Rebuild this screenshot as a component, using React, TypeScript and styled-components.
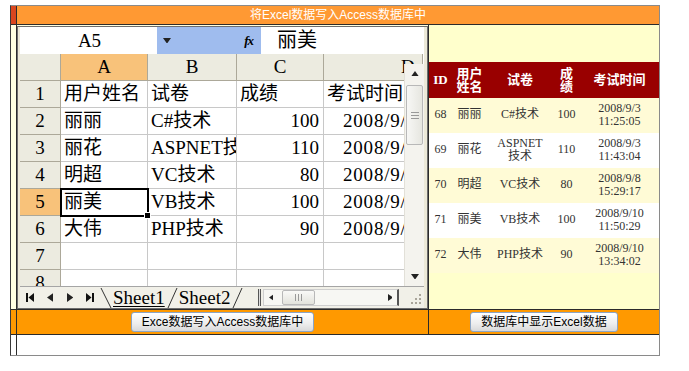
import React from "react";
import styled, { createGlobalStyle, css } from "styled-components";

const DARK = "#2b2b2b";
const SERIF = `"Liberation Serif", "Noto Sans CJK SC", serif`;
const SANS = `"Liberation Sans", "Noto Sans CJK SC", sans-serif`;

const GlobalStyle = createGlobalStyle`
  html, body { margin: 0; padding: 0; background: #ffffff; }
  body { font-family: ${SANS}; }
  * { box-sizing: border-box; }
`;

const Page = styled.div`
  padding: 5px 0 0 10px;
`;

const Frame = styled.div`
  width: 650px;
  display: grid;
  grid-template-columns: 6px 412px 230px;
  grid-template-rows: 19px 285px 25px 20px;
  border: 1px solid #8a8a8a;
  border-left-color: #3a3a3a;
`;

type Tone = "red" | "yellow" | "orange" | "white";
const stubBg: Record<Tone, string> = {
  red: "#d9461f",
  yellow: "#ffffe0",
  orange: "#ff9900",
  white: "#ffffff",
};

const Stub = styled.div<{ $tone: Tone; $last?: boolean }>`
  background: ${(p) => stubBg[p.$tone]};
  border-right: 1px solid ${DARK};
  border-bottom: ${(p) => (p.$last ? "none" : `1px solid ${DARK}`)};
`;

const TitleBar = styled.div`
  grid-column: 2 / 4;
  background: #ff9933;
  border-bottom: 1px solid ${DARK};
  color: #ffffff;
  font-family: ${SANS};
  font-size: 12px;
  line-height: 18px;
  text-align: center;
`;

const ExcelCell = styled.div`
  border-right: 1px solid ${DARK};
  border-bottom: 1px solid ${DARK};
  padding-top: 1px;
  background: #ffffe0;
`;

const DataCell = styled.div`
  background: #ffffcc;
  border-bottom: 1px solid ${DARK};
  display: flex;
  flex-direction: column;
  justify-content: center;
`;

const ButtonCell = styled.div<{ $divider?: boolean }>`
  background: #ff9900;
  border-bottom: 1px solid ${DARK};
  border-right: ${(p) => (p.$divider ? `1px solid ${DARK}` : "none")};
  display: flex;
  align-items: center;
  justify-content: center;
`;

const BottomFill = styled.div`
  grid-column: 2 / 4;
  background: #ffffff;
`;

const XpButton = styled.button`
  height: 20px;
  padding: 0 10px;
  font-family: ${SANS};
  font-size: 12px;
  line-height: 18px;
  color: #000000;
  border: 1px solid #8aa4c6;
  border-radius: 3px;
  background: linear-gradient(#ffffff, #ededed 60%, #d9d9d9);
  cursor: pointer;
`;

/* ---------- Excel control ---------- */

const Excel = styled.div`
  height: 100%;
  border: 1px solid #6d6d6d;
  background: #ece9d8;
  padding: 0 3px 0 2px;
  display: flex;
  flex-direction: column;
`;

const FormulaBar = styled.div`
  height: 27px;
  display: flex;
  flex-shrink: 0;
`;

const NameBox = styled.div`
  width: 137px;
  background: #ffffff;
  font-family: ${SERIF};
  font-size: 19px;
  line-height: 28px;
  text-align: center;
  padding-left: 2px;
`;

const FxArea = styled.div`
  width: 104px;
  background: #9fbcee;
  display: flex;
  align-items: center;
  justify-content: space-between;
  padding: 0 8px 0 6px;
`;

const FxLabel = styled.span`
  font-family: ${SERIF};
  font-style: italic;
  font-weight: bold;
  font-size: 13px;
  letter-spacing: -1px;
`;

const FormulaInput = styled.div`
  flex: 1;
  background: #ffffff;
  padding-left: 16px;
  font-family: ${SERIF};
  font-size: 20px;
  line-height: 26px;
`;

const SheetArea = styled.div`
  position: relative;
  height: 232px;
  flex-shrink: 0;
  overflow: hidden;
  background: #ffffff;
`;

const SheetGrid = styled.div`
  display: grid;
  grid-template-columns: 41px 87px 89px 87px 99px;
  grid-auto-rows: 27px;
  font-family: ${SERIF};
  font-size: 19px;
`;

const HeadCell = styled.div<{ $active?: boolean; $indent?: number }>`
  background: ${(p) => (p.$active ? "#f8c27a" : "#ecebe0")};
  border-right: 1px solid #aca899;
  border-bottom: 1px solid #aca899;
  line-height: 26px;
  text-align: ${(p) => (p.$indent ? "left" : "center")};
  padding-left: ${(p) => p.$indent ?? 0}px;
  color: #000;
  overflow: hidden;
`;

const Cell = styled.div<{ $align?: "left" | "right"; $sel?: boolean; $date?: boolean }>`
  position: relative;
  background: #ffffff;
  border-right: 1px solid #c8c8c8;
  border-bottom: 1px solid #c8c8c8;
  line-height: 26px;
  white-space: nowrap;
  overflow: hidden;
  text-align: ${(p) => p.$align ?? "left"};
  padding: 0 4px 0 3px;
  ${(p) =>
    p.$date &&
    css`
      padding-left: 19px;
      letter-spacing: 0.8px;
    `}
  ${(p) =>
    p.$sel &&
    css`
      overflow: visible;
      z-index: 2;
      &::after {
        content: "";
        position: absolute;
        left: -1px;
        top: -1px;
        right: -2px;
        bottom: -2px;
        border: 2px solid #000;
      }
      &::before {
        content: "";
        position: absolute;
        right: -4px;
        bottom: -4px;
        width: 5px;
        height: 5px;
        background: #000;
        border: 1px solid #fff;
        z-index: 3;
      }
    `}
`;

const VScroll = styled.div`
  position: absolute;
  top: 10px;
  right: 0;
  bottom: 0;
  width: 20px;
  background: #f4f3ee;
  border-left: 1px solid #e2e0d8;
  display: flex;
  flex-direction: column;
  z-index: 4;
`;

const ScrollArrow = styled.div`
  height: 19px;
  display: flex;
  align-items: center;
  justify-content: center;
  flex-shrink: 0;
`;

const VTrack = styled.div`
  flex: 1;
  padding-top: 2px;
`;

const VThumb = styled.div`
  height: 60px;
  margin: 0 1px;
  border: 1px solid #b8b8b8;
  border-radius: 2px;
  background: linear-gradient(90deg, #f7f7f5, #e6e6e0);
  display: flex;
  align-items: center;
  justify-content: center;
`;

const TabBar = styled.div`
  height: 22px;
  flex-shrink: 0;
  display: flex;
  align-items: center;
  background: #f1f0e8;
  border-top: 1px solid #a5a5a5;
`;

const NavGroup = styled.div`
  width: 80px;
  display: flex;
  height: 100%;
`;

const NavBtn = styled.div`
  width: 20px;
  display: flex;
  align-items: center;
  justify-content: center;
`;

const SheetTab = styled.span<{ $active?: boolean }>`
  font-family: ${SERIF};
  font-size: 19px;
  line-height: 20px;
  padding: 0 1px;
  text-decoration: ${(p) => (p.$active ? "underline" : "none")};
  text-underline-offset: 2px;
  color: #000;
`;

const Spacer = styled.div`
  flex: 1;
`;

const SplitBar = styled.div`
  width: 3px;
  height: 17px;
  border-left: 1px solid #555;
  border-right: 1px solid #555;
  background: #dcdcdc;
  margin-right: 2px;
`;

const HScroll = styled.div`
  width: 136px;
  height: 17px;
  display: flex;
  align-items: center;
  background: #f7f7f3;
  border: 1px solid #cfcfcf;
  border-right: 2px solid #555;
`;

const HArrow = styled.div`
  width: 14px;
  height: 100%;
  display: flex;
  align-items: center;
  justify-content: center;
`;

const HThumb = styled.div`
  width: 33px;
  height: 15px;
  margin-left: 4px;
  border: 1px solid #b8b8b8;
  border-radius: 2px;
  background: linear-gradient(#f9f9f7, #e3e3dc);
  display: flex;
  align-items: center;
  justify-content: center;
`;

const Grip = styled.div`
  width: 20px;
  margin-left: 5px;
  height: 100%;
  display: flex;
  align-items: flex-end;
  justify-content: flex-end;
  padding: 0 2px 3px 0;
`;

/* ---------- Data table (GridView) ---------- */

const DataTable = styled.table`
  width: 100%;
  border-collapse: collapse;
  table-layout: fixed;
  font-family: ${SERIF};
  font-size: 12px;
  color: #333333;
`;

const Th = styled.th`
  background: #990000;
  color: #ffffff;
  font-weight: bold;
  font-size: 13px;
  line-height: 13px;
  padding: 5px 2px;
  text-align: center;
`;

const Tr = styled.tr<{ $alt?: boolean }>`
  background: ${(p) => (p.$alt ? "#ffffff" : "#fffbd6")};
`;

const Td = styled.td<{ $inset?: number }>`
  padding: 4px ${(p) => p.$inset ?? 3}px;
  line-height: 13.5px;
  text-align: center;
  vertical-align: middle;
`;

/* ---------- icons ---------- */

const Tri = ({ dir, size = 7 }: { dir: "up" | "down" | "left" | "right"; size?: number }) => {
  const s = size;
  const pts: Record<string, string> = {
    up: `0,${s * 0.7} ${s / 2},0 ${s},${s * 0.7}`,
    down: `0,0 ${s},0 ${s / 2},${s * 0.7}`,
    left: `${s * 0.7},0 ${s * 0.7},${s} 0,${s / 2}`,
    right: `0,0 0,${s} ${s * 0.7},${s / 2}`,
  };
  const w = dir === "left" || dir === "right" ? s * 0.7 : s;
  const h = dir === "left" || dir === "right" ? s : s * 0.7;
  return (
    <svg width={w} height={h} viewBox={`0 0 ${w} ${h}`}>
      <polygon points={pts[dir]} fill="#222" />
    </svg>
  );
};

const FirstIcon = () => (
  <svg width="8" height="9" viewBox="0 0 8 9">
    <rect x="0" y="0" width="2" height="9" fill="#111" />
    <polygon points="8,0 8,9 2.5,4.5" fill="#111" />
  </svg>
);
const LastIcon = () => (
  <svg width="8" height="9" viewBox="0 0 8 9">
    <polygon points="0,0 0,9 5.5,4.5" fill="#111" />
    <rect x="6" y="0" width="2" height="9" fill="#111" />
  </svg>
);

const Slant = ({ back }: { back?: boolean }) => (
  <svg width="12" height="22" viewBox="0 0 12 22">
    {back ? (
      <line x1="1" y1="1" x2="11" y2="21" stroke="#333" strokeWidth="1" />
    ) : (
      <line x1="11" y1="1" x2="2" y2="21" stroke="#333" strokeWidth="1" />
    )}
  </svg>
);

const GripDots = () => (
  <svg width="12" height="12" viewBox="0 0 12 12">
    {[
      [9, 1],
      [9, 5],
      [5, 5],
      [9, 9],
      [5, 9],
      [1, 9],
    ].map(([x, y], i) => (
      <rect key={i} x={x} y={y} width="2" height="2" fill="#a9a59a" />
    ))}
  </svg>
);

/* ---------- data ---------- */

const sheetRows: [string, string, string, string][] = [
  ["用户姓名", "试卷", "成绩", "考试时间"],
  ["丽丽", "C#技术", "100", "2008/9/3"],
  ["丽花", "ASPNET技术", "110", "2008/9/3"],
  ["明超", "VC技术", "80", "2008/9/8"],
  ["丽美", "VB技术", "100", "2008/9/10"],
  ["大伟", "PHP技术", "90", "2008/9/10"],
  ["", "", "", ""],
  ["", "", "", ""],
];

const records = [
  { id: "68", name: "丽丽", paper: "C#技术", score: "100", date: "2008/9/3", time: "11:25:05" },
  { id: "69", name: "丽花", paper: "ASPNET技术", score: "110", date: "2008/9/3", time: "11:43:04" },
  { id: "70", name: "明超", paper: "VC技术", score: "80", date: "2008/9/8", time: "15:29:17" },
  { id: "71", name: "丽美", paper: "VB技术", score: "100", date: "2008/9/10", time: "11:50:29" },
  { id: "72", name: "大伟", paper: "PHP技术", score: "90", date: "2008/9/10", time: "13:34:02" },
];

const SelectedRow = 5;

const ExcelSheet = () => (
  <Excel>
    <FormulaBar>
      <NameBox>A5</NameBox>
      <FxArea>
        <Tri dir="down" size={8} />
        <FxLabel>fx</FxLabel>
      </FxArea>
      <FormulaInput>丽美</FormulaInput>
    </FormulaBar>
    <SheetArea>
      <SheetGrid>
        <HeadCell />
        <HeadCell $active>A</HeadCell>
        <HeadCell>B</HeadCell>
        <HeadCell>C</HeadCell>
        <HeadCell $indent={77}>D</HeadCell>
        {sheetRows.map((r, i) => {
          const n = i + 1;
          const isHeader = n === 1;
          return (
            <React.Fragment key={n}>
              <HeadCell $active={n === SelectedRow}>{n}</HeadCell>
              <Cell $sel={n === SelectedRow}>{r[0]}</Cell>
              <Cell>{r[1]}</Cell>
              <Cell $align={isHeader ? "left" : "right"}>{r[2]}</Cell>
              <Cell $date={!isHeader && r[3] !== ""}>{r[3]}</Cell>
            </React.Fragment>
          );
        })}
      </SheetGrid>
      <VScroll>
        <ScrollArrow>
          <Tri dir="up" size={8} />
        </ScrollArrow>
        <VTrack>
          <VThumb>
            <svg width="8" height="7" viewBox="0 0 8 7">
              <rect x="0" y="0" width="8" height="1" fill="#999" />
              <rect x="0" y="3" width="8" height="1" fill="#999" />
              <rect x="0" y="6" width="8" height="1" fill="#999" />
            </svg>
          </VThumb>
        </VTrack>
        <ScrollArrow>
          <Tri dir="down" size={8} />
        </ScrollArrow>
      </VScroll>
    </SheetArea>
    <TabBar>
      <NavGroup>
        <NavBtn>
          <FirstIcon />
        </NavBtn>
        <NavBtn>
          <Tri dir="left" size={9} />
        </NavBtn>
        <NavBtn>
          <Tri dir="right" size={9} />
        </NavBtn>
        <NavBtn>
          <LastIcon />
        </NavBtn>
      </NavGroup>
      <Slant back />
      <SheetTab $active>Sheet1</SheetTab>
      <Slant />
      <SheetTab>Sheet2</SheetTab>
      <Slant />
      <Spacer />
      <SplitBar />
      <HScroll>
        <HArrow>
          <Tri dir="left" size={7} />
        </HArrow>
        <HThumb>
          <svg width="7" height="7" viewBox="0 0 7 7">
            <rect x="0" y="0" width="1" height="7" fill="#999" />
            <rect x="3" y="0" width="1" height="7" fill="#999" />
            <rect x="6" y="0" width="1" height="7" fill="#999" />
          </svg>
        </HThumb>
        <Spacer />
        <HArrow>
          <Tri dir="right" size={7} />
        </HArrow>
      </HScroll>
      <Grip>
        <GripDots />
      </Grip>
    </TabBar>
  </Excel>
);

const ResultGrid = () => (
  <DataTable>
    <colgroup>
      <col style={{ width: 23 }} />
      <col style={{ width: 35 }} />
      <col style={{ width: 66 }} />
      <col style={{ width: 27 }} />
      <col style={{ width: 79 }} />
    </colgroup>
    <thead>
      <tr>
        <Th>ID</Th>
        <Th>用户姓名</Th>
        <Th>试卷</Th>
        <Th>成绩</Th>
        <Th>考试时间</Th>
      </tr>
    </thead>
    <tbody>
      {records.map((r, i) => (
        <Tr key={r.id} $alt={i % 2 === 1}>
          <Td>{r.id}</Td>
          <Td>{r.name}</Td>
          <Td $inset={6}>{r.paper}</Td>
          <Td>{r.score}</Td>
          <Td>
            {r.date} {r.time}
          </Td>
        </Tr>
      ))}
    </tbody>
  </DataTable>
);

export default function App() {
  return (
    <>
      <GlobalStyle />
      <Page>
        <Frame>
          <Stub $tone="red" />
          <TitleBar>将Excel数据写入Access数据库中</TitleBar>

          <Stub $tone="yellow" />
          <ExcelCell>
            <ExcelSheet />
          </ExcelCell>
          <DataCell>
            <ResultGrid />
          </DataCell>

          <Stub $tone="orange" />
          <ButtonCell $divider>
            <XpButton type="button">Exce数据写入Access数据库中</XpButton>
          </ButtonCell>
          <ButtonCell>
            <XpButton type="button">数据库中显示Excel数据</XpButton>
          </ButtonCell>

          <Stub $tone="white" $last />
          <BottomFill />
        </Frame>
      </Page>
    </>
  );
}
